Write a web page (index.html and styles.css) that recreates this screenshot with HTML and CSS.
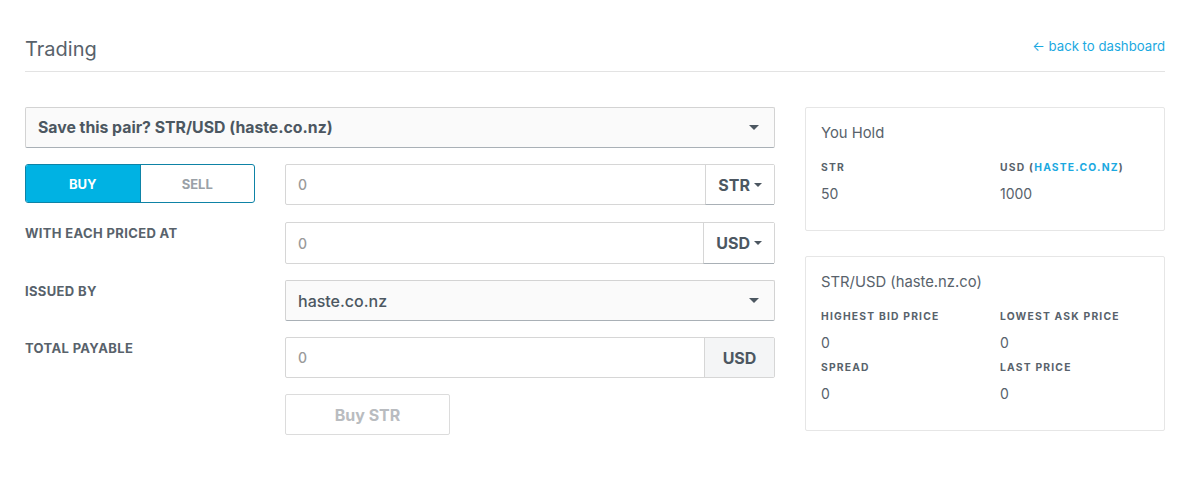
FILE: index.html
```html
<!DOCTYPE html>
<html>
<head>
<meta charset="utf-8">
<link rel="stylesheet" href="styles.css">
</head>
<body>
<div class="page">
  <header class="head">
    <h1 class="title">Trading</h1>
    <a class="back" href="#">← back to dashboard</a>
  </header>
  <div class="main">
    <div class="left">
      <div class="select big">
        <span>Save this pair? STR/USD (haste.co.nz)</span>
        <span class="caret"></span>
      </div>
      <div class="rows">
        <div class="toggle">
          <div class="tbtn on">BUY</div>
          <div class="tbtn">SELL</div>
        </div>
        <div class="group">
          <div class="inp">0</div>
          <div class="addon drop">STR <span class="caret sm"></span></div>
        </div>

        <div class="label">WITH EACH PRICED AT</div>
        <div class="group">
          <div class="inp">0</div>
          <div class="addon drop">USD <span class="caret sm"></span></div>
        </div>

        <div class="label">ISSUED BY</div>
        <div class="select">
          <span>haste.co.nz</span>
          <span class="caret"></span>
        </div>

        <div class="label">TOTAL PAYABLE</div>
        <div class="group">
          <div class="inp">0</div>
          <div class="addon static">USD</div>
        </div>

        <div></div>
        <div><div class="submit">Buy STR</div></div>
      </div>
    </div>
    <div class="right">
      <div class="panel">
        <div class="ptitle">You Hold</div>
        <div class="pgrid">
          <div><div class="plabel">STR</div><div class="pval">50</div></div>
          <div><div class="plabel">USD (<span class="blue">HASTE.CO.NZ</span>)</div><div class="pval">1000</div></div>
        </div>
      </div>
      <div class="panel p2">
        <div class="ptitle">STR/USD (haste.nz.co)</div>
        <div class="pgrid">
          <div><div class="plabel">HIGHEST BID PRICE</div><div class="pval">0</div></div>
          <div><div class="plabel">LOWEST ASK PRICE</div><div class="pval">0</div></div>
          <div><div class="plabel">SPREAD</div><div class="pval">0</div></div>
          <div><div class="plabel">LAST PRICE</div><div class="pval">0</div></div>
        </div>
      </div>
    </div>
  </div>
</div>
</body>
</html>
```
FILE: styles.css
```css
* { box-sizing: border-box; }
body {
  margin: 0;
  font-family: Inter, Roboto, "Liberation Sans", sans-serif;
  color: #4c5761;
  background: #fff;
}
.page { padding: 0 25px; }
.head {
  display: flex;
  justify-content: space-between;
  align-items: flex-end;
  height: 72px;
  border-bottom: 1px solid #e3e3e3;
  padding-bottom: 10px;
}
.title {
  margin: 0;
  font-size: 20px;
  font-weight: 400;
  color: #58626b;
}
.back {
  color: #1ba9e1;
  text-decoration: none;
  font-size: 13.2px;
  padding-bottom: 7px;
}
.main {
  display: grid;
  grid-template-columns: 750px 360px;
  gap: 30px;
  margin-top: 35px;
}
.select {
  height: 41px;
  border: 1px solid #d3d3d3;
  border-bottom-color: #a9b0b6;
  border-radius: 2px;
  background: #fafafa;
  display: flex;
  align-items: center;
  justify-content: space-between;
  padding: 0 15px 0 12px;
  font-size: 16px;
  font-weight: 500;
  color: #4c5761;
}
.select.big { font-weight: 700; font-size: 15.8px; }
.caret {
  width: 0; height: 0;
  border-left: 5px solid transparent;
  border-right: 5px solid transparent;
  border-top: 5px solid #4c5761;
}
.caret.sm { border-width: 4px 4px 0 4px; display: inline-block; vertical-align: middle; margin-left: 4px; }
.rows {
  display: grid;
  grid-template-columns: 230px 490px;
  grid-template-rows: 42px 42px 41px 41px 41px;
  column-gap: 30px;
  row-gap: 16px;
  margin-top: 16px;
}
.toggle {
  display: flex;
  height: 39px;
  border: 1px solid #0e83a6;
  border-radius: 3px;
  overflow: hidden;
}
.tbtn {
  flex: 1;
  display: flex;
  align-items: center;
  justify-content: center;
  font-size: 13px;
  font-weight: 700;
  color: #9aa1a7;
}
.tbtn.on { background: #00b2e3; color: #fff; border-right: 1px solid #0e83a6; }
.label {
  font-size: 13px;
  font-weight: 700;
  letter-spacing: 0.35px;
  color: #58626b;
  padding-top: 3px;
}
.group {
  display: flex;
  height: 41px;
  border: 1px solid #d6d6d6;
  border-radius: 2px;
}
.rows > .group:nth-child(4) { height: 42px; }
.inp {
  flex: 1;
  display: flex;
  align-items: center;
  padding-left: 12px;
  font-size: 14px;
  font-weight: 500;
  color: #9a9a9a;
}
.addon {
  display: flex;
  align-items: center;
  justify-content: center;
  border-left: 1px solid #d6d6d6;
  font-weight: 700;
  font-size: 16px;
  color: #4c5761;
}
.addon.drop { padding: 0 12px; background: #fff; border-bottom: 1px solid #a9b0b6; margin-bottom: -1px; }
.addon.static { width: 70px; background: #f4f5f6; }
.submit {
  width: 165px;
  height: 41px;
  border: 1px solid #dcdcdc;
  border-radius: 2px;
  display: flex;
  align-items: center;
  justify-content: center;
  font-size: 16px;
  font-weight: 700;
  color: #b9bcc0;
}
.panel {
  border: 1px solid #e6e6e6;
  border-radius: 2px;
  padding: 16px 15px 0;
  height: 124px;
}
.panel.p2 { margin-top: 25px; height: 175px; }
.ptitle { font-size: 14.8px; color: #58626b; }
.pgrid {
  display: grid;
  grid-template-columns: 179px 1fr;
  margin-top: 19px;
  row-gap: 10px;
}
.plabel {
  font-size: 10.3px;
  font-weight: 700;
  letter-spacing: 1.2px;
  color: #58626b;
}
.pval { font-size: 14px; color: #58626b; margin-top: 12px; }
.blue { color: #1ba9e1; }
```
